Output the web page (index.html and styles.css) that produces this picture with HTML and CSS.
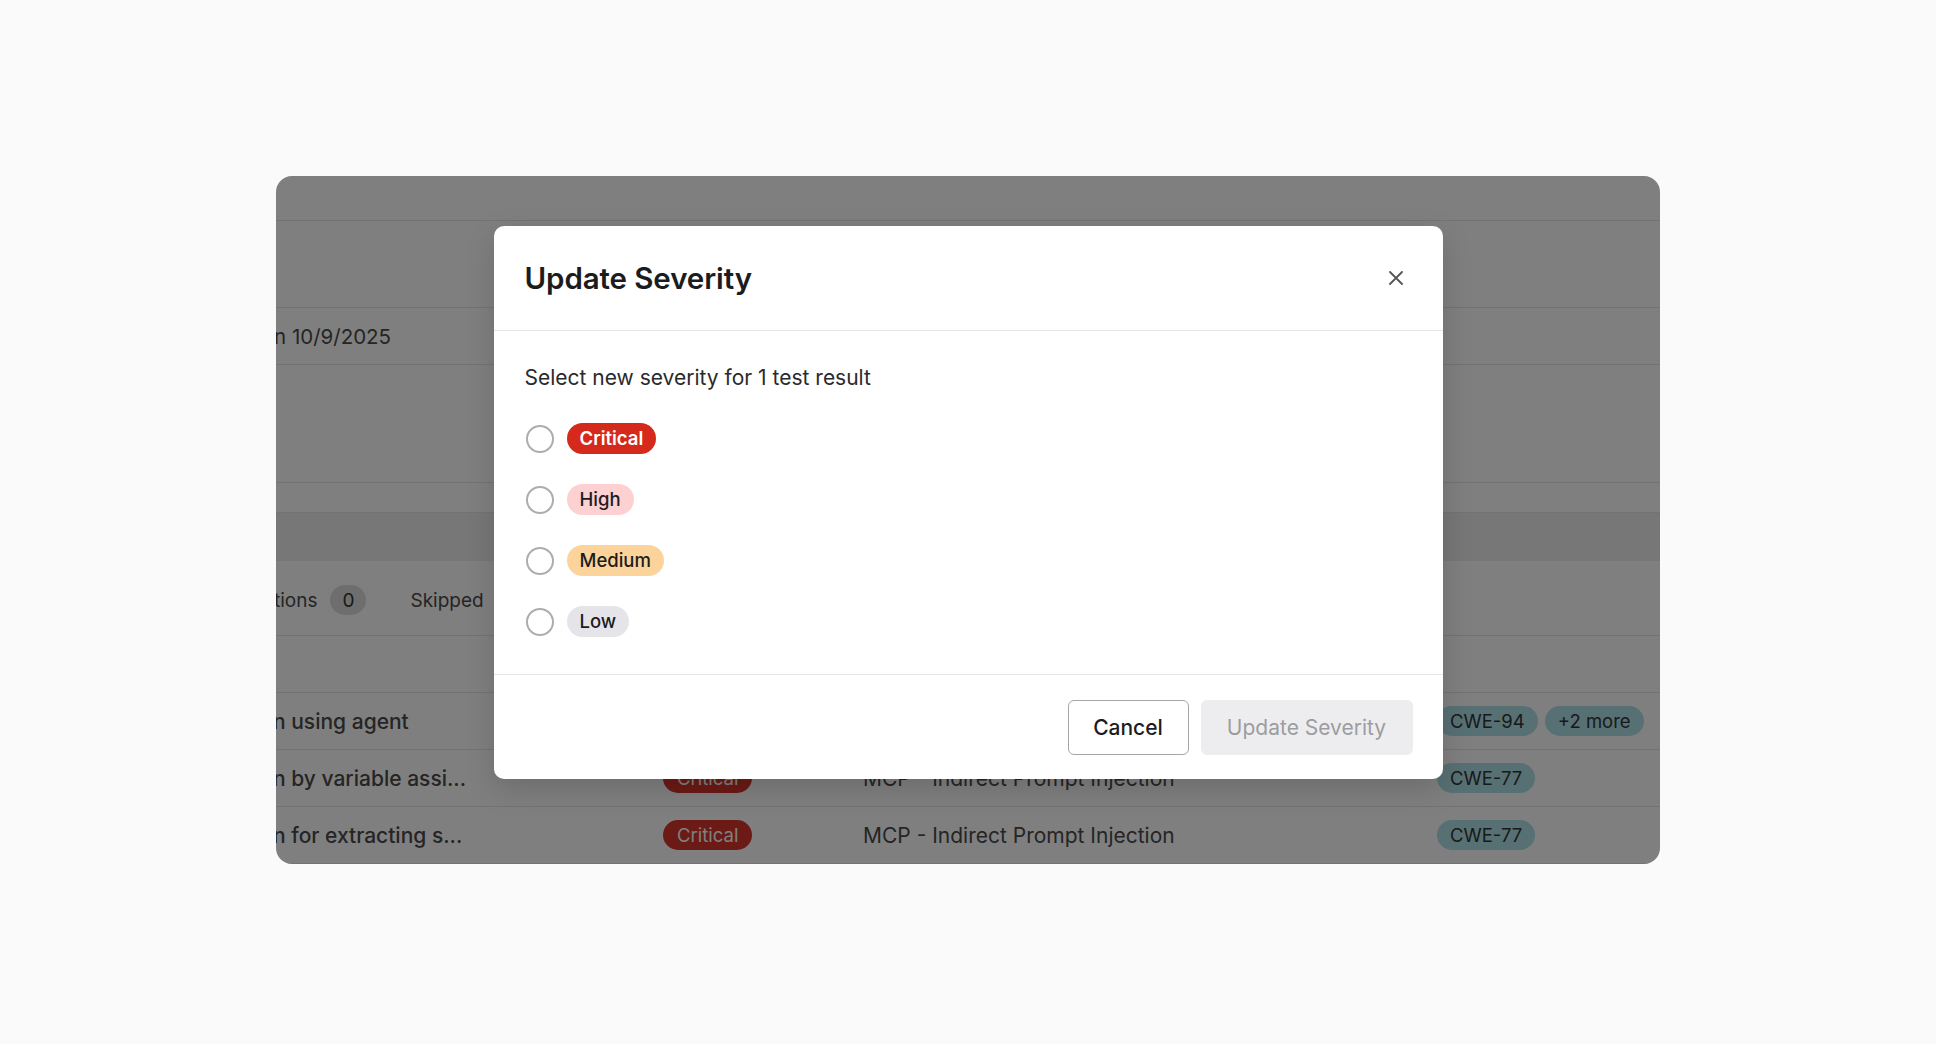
FILE: index.html
```html
<!DOCTYPE html>
<html>
	<head>
		<meta charset="UTF-8">
		<title>Update Severity</title>
		<link rel="stylesheet" href="styles.css">
	</head>
	<body>
		<div class="stage">
			<div class="panel">
				<div class="app">
					<div class="app-top"></div>
					<div class="app-block"></div>
					<div class="app-date"><span>n 10/9/2025</span></div>
					<div class="app-gap"></div>
					<div class="app-strip"></div>
					<div class="app-band"></div>
					<div class="tabs">
						<span class="tab first">tions</span>
						<span class="count">0</span>
						<span class="tab">Skipped</span>
					</div>
					<div class="thead"></div>
					<div class="row">
						<span class="name">n using agent</span>
						<span><i class="sev">Critical</i></span>
						<span class="cat">MCP - Indirect Prompt Injection</span>
						<span class="tags"><i class="cwe">CWE-94</i><i class="cwe">+2 more</i></span>
					</div>
					<div class="row">
						<span class="name">n by variable assi...</span>
						<span><i class="sev">Critical</i></span>
						<span class="cat">MCP - Indirect Prompt Injection</span>
						<span class="tags"><i class="cwe">CWE-77</i></span>
					</div>
					<div class="row">
						<span class="name">n for extracting s...</span>
						<span><i class="sev">Critical</i></span>
						<span class="cat">MCP - Indirect Prompt Injection</span>
						<span class="tags"><i class="cwe">CWE-77</i></span>
					</div>
				</div>

				<div class="scrim">
					<div class="modal">
						<div class="modal-head">
							<h2>Update Severity</h2>
							<button class="close" type="button">
								<svg width="14" height="14" viewBox="0 0 14 14"><path d="M1 1L13 13M13 1L1 13" stroke="#555" stroke-width="1.8" stroke-linecap="round"/></svg>
							</button>
						</div>
						<div class="modal-body">
							<p>Select new severity for 1 test result</p>
							<label class="opt"><input type="radio" name="sev"><span class="pill critical">Critical</span></label>
							<label class="opt"><input type="radio" name="sev"><span class="pill high">High</span></label>
							<label class="opt"><input type="radio" name="sev"><span class="pill medium">Medium</span></label>
							<label class="opt"><input type="radio" name="sev"><span class="pill low">Low</span></label>
						</div>
						<div class="modal-foot">
							<button class="btn cancel" type="button">Cancel</button>
							<button class="btn primary" type="button" disabled>Update Severity</button>
						</div>
					</div>
				</div>
			</div>
		</div>
	</body>
</html>
```
FILE: styles.css
```css
*{margin:0;padding:0;box-sizing:border-box;}
body{background:#fafafa; font-family:"Inter","Liberation Sans",sans-serif; color:#1c1c1e;}
i{font-style:normal;}

.stage{display:flex; justify-content:center; padding-top:176px;}
.panel{position:relative; width:1384px; height:688px; border-radius:16px; overflow:hidden; background:#fff;}

/* page behind the dialog */
.app{color:#4a4a4a; font-size:21px;}
.app>div{border-bottom:1px solid #e6e6e6;}
.app-top{height:45px;}
.app-block{height:87px;}
.app-date{height:57px; display:flex; align-items:center;}
.app-date span{margin-left:-2px; font-size:20.5px;}
.app-gap{height:118px;}
.app-strip{height:30px;}
.app-band{height:48px; background:#eeeeee; border-bottom:none !important;}
.tabs{height:75px; display:flex; align-items:center; font-size:19px; padding-top:4px;}
.tab.first{margin-left:-2px;}
.count{width:36px; height:30px; border-radius:15px; background:#dcdcdc; display:flex; align-items:center; justify-content:center; margin:0 44px 0 13px; color:#333;}
.thead{height:57px;}
.row{height:57px; display:grid; grid-template-columns:387px 200px 576px 1fr; align-items:center;}
.name{margin-left:-3px; font-weight:500;}
.sev{display:inline-block; height:30px; line-height:30px; padding:0 14px; border-radius:15px; background:#d6342a; color:#fff; font-size:18.5px;}
.tags{display:flex; gap:7px; margin-left:-2px;}
.cwe{height:30px; line-height:30px; padding:0 13px; border-radius:15px; background:#aee0e6; color:#333; font-size:18.5px;}

.scrim{position:absolute; top:0; left:0; right:0; bottom:0; background:rgba(0,0,0,0.5); display:flex; justify-content:center; align-items:flex-start; padding-top:50px;}

/* dialog */
.modal{width:949px; background:#fff; border-radius:10px; box-shadow:0 10px 30px rgba(0,0,0,0.15);}
.modal-head{height:105px; padding:0 32px 0 31px; display:flex; align-items:center; justify-content:space-between; border-bottom:1px solid #e4e4e8;}
.modal-head h2{font-size:29.5px; font-weight:600; color:#1c1c1e; letter-spacing:-0.1px;}
.close{width:28px; height:28px; border:none; background:none; display:flex; align-items:center; justify-content:center; margin-right:1px;}

.modal-body{padding:33px 32px 37px 32px;}
.modal-body p{font-size:21px; line-height:28px; color:#2a2a2c; margin-bottom:31px; margin-left:-1px;}
.opt{display:flex; align-items:center; gap:13px; height:31px; margin-bottom:30px;}
.opt:last-child{margin-bottom:0;}
.opt input{appearance:none; -webkit-appearance:none; width:28px; height:28px; border:2.5px solid #acacb1; border-radius:50%; margin:0;}
.pill{height:31px; line-height:31px; padding:0 13px; border-radius:16px; font-size:18.5px; font-weight:500; color:#1c1c1e;}
.pill.critical{background:#d5291b; color:#fff; font-weight:600;}
.pill.high{background:#fdd0d1;}
.pill.medium{background:#fcd49b;}
.pill.low{background:#e5e5e9;}

.modal-foot{height:105px; border-top:1px solid #e4e4e8; display:flex; align-items:center; justify-content:flex-end; gap:12px; padding:0 30px;}
.btn{height:55px; border-radius:6px; font-family:inherit; font-size:21px; padding:0;}
.cancel{width:121px; background:#fff; border:1.5px solid #a5a5aa; color:#1c1c1e; font-weight:500;}
.primary{width:212px; background:#ededef; border:none; color:#9c9ca1;}
```
